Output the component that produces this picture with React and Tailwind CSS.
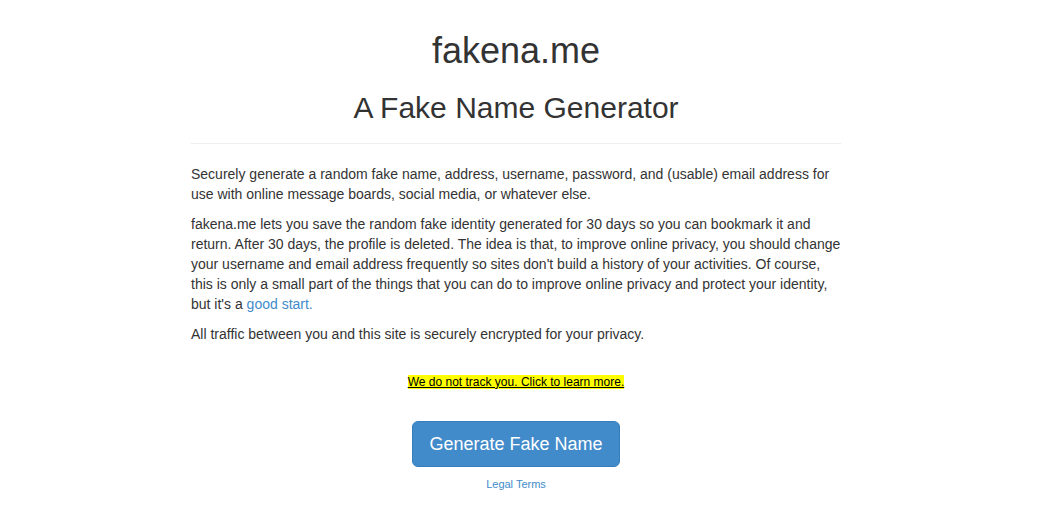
export default function App() {
  return (
    <div className="min-h-[510px] bg-white font-['Liberation_Sans',Arial,sans-serif] text-[#333]">
      <div className="ml-[191px] w-[650px] pt-[31px]">
        <h1 className="text-center text-[36px] leading-[39.6px]">fakena.me</h1>
        <h2 className="mt-[20px] text-center text-[30px] leading-[33px]">A Fake Name Generator</h2>
        <hr className="mt-[19px] border-0 border-t border-[#eee]" />

        <p className="mt-[20px] text-[14px] leading-[20px]">
          Securely generate a random fake name, address, username, password, and (usable) email address for
          use with online message boards, social media, or whatever else.
        </p>
        <p className="mt-[10px] text-[14px] leading-[20px]">
          fakena.me lets you save the random fake identity generated for 30 days so you can bookmark it and
          return. After 30 days, the profile is deleted. The idea is that, to improve online privacy, you should
          change your username and email address frequently so sites don't build a history of your activities.
          Of course, this is only a small part of the things that you can do to improve online privacy and
          protect your identity, but it's a <a href="#" className="text-[#428bca]">good start.</a>
        </p>
        <p className="mt-[10px] text-[14px] leading-[20px]">
          All traffic between you and this site is securely encrypted for your privacy.
        </p>

        <div className="mt-[28px] text-center text-[12px] leading-[20px]">
          <a href="#" className="bg-[#ffff00] text-black underline">We do not track you. Click to learn more.</a>
        </div>

        <div className="mt-[29px] flex justify-center">
          <button className="rounded-[6px] border border-[#357ebd] bg-[#428bca] px-[16px] py-[10px] text-[18px] leading-[24px] text-white">
            Generate Fake Name
          </button>
        </div>

        <div className="mt-[9px] text-center text-[11px] leading-[16px]">
          <a href="#" className="text-[#428bca]">Legal Terms</a>
        </div>
      </div>
    </div>
  )
}
